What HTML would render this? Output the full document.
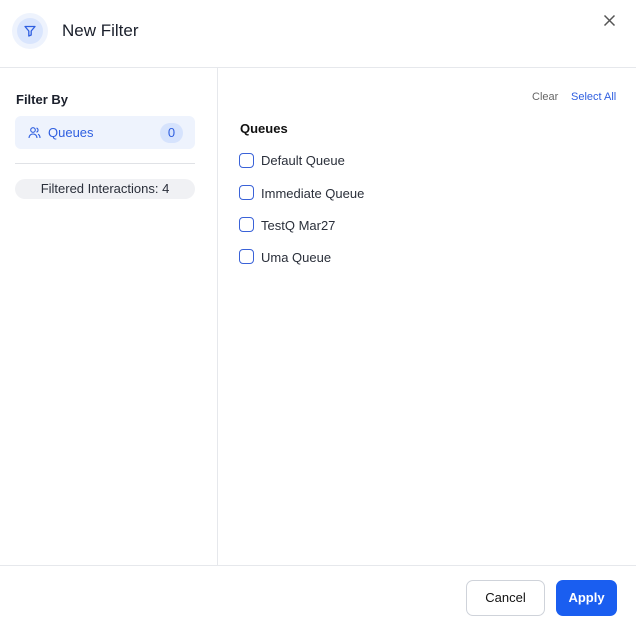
<!DOCTYPE html>
<html><head><style>
*{box-sizing:border-box;margin:0;padding:0}
body{width:636px;height:624px;background:#fff;font-family:"Liberation Sans",sans-serif;position:relative;overflow:hidden;color:#1a1f2b}
.abs{position:absolute}
.cb{position:absolute;left:239px;width:15px;height:15px;border:1.5px solid #3a62d8;border-radius:4px}
.lb{position:absolute;left:261px;font-size:13px;color:#2a2f3a}
</style></head><body>
<div class="abs" style="left:12px;top:13px;width:36px;height:36px;border-radius:50%;background:#eef3fd"></div>
<div class="abs" style="left:17px;top:18px;width:26px;height:26px;border-radius:50%;background:#d9e5fd"></div>
<svg class="abs" style="left:23px;top:24px" width="14" height="14" viewBox="0 0 14 14"><path d="M2 2.5h10L8.2 7v4L5.8 12V7Z" fill="none" stroke="#2f5fe0" stroke-width="1.3" stroke-linejoin="round"/></svg>
<div class="abs" style="left:62px;top:21px;font-size:17px;color:#1a1f2b">New Filter</div>
<svg class="abs" style="left:603px;top:14px" width="13" height="13" viewBox="0 0 13 13"><path d="M1.5 1.5l10 10M11.5 1.5l-10 10" stroke="#555" stroke-width="1.5"/></svg>
<div class="abs" style="left:0;top:67px;width:636px;height:1px;background:#e6e8ec"></div>
<div class="abs" style="left:217px;top:68px;width:1px;height:497px;background:#e6e8ec"></div>
<div class="abs" style="left:0;top:565px;width:636px;height:1px;background:#e6e8ec"></div>
<div class="abs" style="left:16px;top:92px;font-size:13px;font-weight:bold">Filter By</div>
<div class="abs" style="left:15px;top:116px;width:180px;height:33px;border-radius:6px;background:#eef3fd"></div>
<svg class="abs" style="left:28px;top:126px" width="13" height="13" viewBox="0 0 13 13"><circle cx="5" cy="4" r="2.3" fill="none" stroke="#2f5fe0" stroke-width="1.1"/><path d="M1 12c0-2.5 1.8-4 4-4s4 1.5 4 4M8.5 2a2.2 2.2 0 010 4.2M10 8.3c1.3.5 2 1.8 2 3.7" fill="none" stroke="#2f5fe0" stroke-width="1.1"/></svg>
<div class="abs" style="left:48px;top:125px;font-size:13px;color:#2f5fe0">Queues</div>
<div class="abs" style="left:160px;top:123px;width:23px;height:20px;border-radius:10px;background:#d6e3fd;color:#2f5fe0;font-size:13px;text-align:center;line-height:20px">0</div>
<div class="abs" style="left:15px;top:163px;width:180px;height:1px;background:#e0e2e6"></div>
<div class="abs" style="left:15px;top:179px;width:180px;height:20px;border-radius:10px;background:#f0f1f4;font-size:13px;text-align:center;line-height:20px;color:#2a2f3a">Filtered Interactions: 4</div>
<div class="abs" style="left:532px;top:91px;font-size:11px;color:#666">Clear</div>
<div class="abs" style="left:571px;top:91px;font-size:11px;color:#2f5fe0">Select All</div>
<div class="abs" style="left:240px;top:121px;font-size:13px;font-weight:bold;color:#111">Queues</div>
<div class="cb" style="top:153px"></div><div class="lb" style="top:153px">Default Queue</div>
<div class="cb" style="top:185px"></div><div class="lb" style="top:186px">Immediate Queue</div>
<div class="cb" style="top:217px"></div><div class="lb" style="top:218px">TestQ Mar27</div>
<div class="cb" style="top:249px"></div><div class="lb" style="top:250px">Uma Queue</div>
<div class="abs" style="left:466px;top:580px;width:79px;height:36px;border:1px solid #cfd3da;border-radius:7px;font-size:13px;text-align:center;line-height:34px;color:#111">Cancel</div>
<div class="abs" style="left:556px;top:580px;width:61px;height:36px;background:#1a5ef0;border-radius:7px;font-size:13px;text-align:center;line-height:36px;color:#fff;font-weight:bold">Apply</div>
</body></html>
